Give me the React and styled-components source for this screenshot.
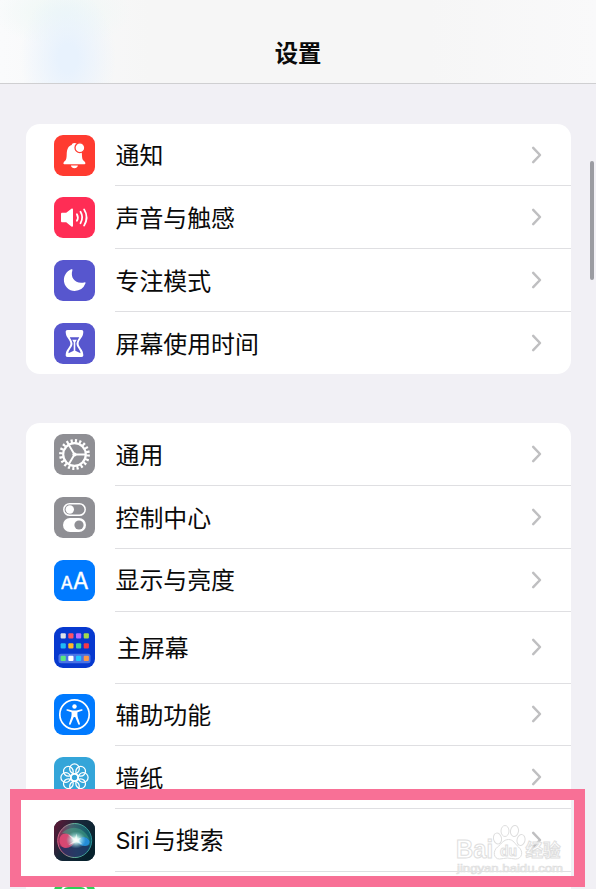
import React from "react"
import styled, { createGlobalStyle } from "styled-components"

const GlobalStyle = createGlobalStyle`
  * {
    box-sizing: border-box;
  }

  body {
    margin: 0;
    overflow: hidden;
    background: #f1f0f5;
    font-family: Inter, "Noto Sans CJK SC", sans-serif;
  }
`

const Screen = styled.div`
  position: relative;
  height: 889px;
  overflow: hidden;
`

const Header = styled.header`
  display: flex;
  justify-content: center;
  height: 84px;
  padding-top: 35px;
  border-bottom: 1px solid #cfcfd1;
  background:
    radial-gradient(ellipse 48px 70px at 68px 58px, #e8f2fd 20%, rgba(232, 242, 253, 0) 100%),
    radial-gradient(ellipse 70px 34px at 62px 12px, #eff8f6 10%, rgba(239, 248, 246, 0) 100%),
    linear-gradient(90deg, #fafbfc, #f6f6f6 25%, #f6f6f6 72%, #f9f9fa);
`

const Title = styled.h1`
  margin: 0;
  color: #0b0b0b;
  font-family: "Noto Sans CJK SC", sans-serif;
  font-size: 23.3px;
  font-weight: 700;
  line-height: 34px;
`

const Groups = styled.main`
  display: flex;
  flex-direction: column;
  gap: 49px;
  padding: 39.7px 25.5px 0 26px;
`

const Card = styled.section`
  flex: none;
  overflow: hidden;
  border-radius: 14px;
  background: #fff;
`

const Row = styled.div`
  display: flex;
  align-items: center;
  gap: 20px;
  height: ${props => props.$height || 62.7}px;
  padding-left: 28px;
`

const IconTile = styled.div`
  flex: none;
  width: 41px;
  height: 41px;
  overflow: hidden;
  border-radius: 9px;
  background: ${props => props.$color};

  svg {
    display: block;
  }
`

const Content = styled.div`
  flex: 1;
  display: flex;
  align-items: center;
  justify-content: space-between;
  height: 100%;
  padding: 0 28px 0 ${props => props.$indent || 0.5}px;
  border-bottom: ${props => (props.$last ? "none" : "1px solid #dfdfe2")};
`

const Label = styled.span`
  padding-top: 3.5px;
  color: #0a0a0a;
  font-size: 23.9px;
  line-height: 34px;
  white-space: nowrap;
`

const Latin = styled.span`
  margin-right: 3px;
  font-size: 23.3px;
  letter-spacing: -0.5px;
`

const ScrollThumb = styled.div`
  position: absolute;
  top: 161px;
  right: 2px;
  width: 4px;
  height: 119px;
  border-radius: 2px;
  background: #9b9ca2;
`

const Highlight = styled.div`
  position: absolute;
  top: 789px;
  left: 10px;
  width: 575px;
  height: 98px;
  border: 11px solid #f87096;
  background: linear-gradient(90deg, #fff 5px, transparent 5px);
`

const Watermark = styled.svg`
  position: absolute;
  top: 820px;
  left: 452px;
`

const BellIcon = () =>
  <svg width="41" height="41" viewBox="0 0 41 41" fill="#fff">
    <path d="M9.400 28.400c0-1 .9-1.800 1.800-2.600 1.200-1.200 1.400-3.300 1.500-6.300.2-5.300 1.400-8.500 5-9.600.4-1.200 1.200-1.900 2.600-1.900 4 0 7.300 4 7.600 11.100.2 4.100.4 5.400 1.800 6.700.8.8 1.700 1.500 1.700 2.500 0 .7-.6 1-1.400 1H10.800c-.9 0-1.400-.4-1.400-1z" />
    <circle cx="25.900" cy="12.700" r="4.900" stroke="#ff3b30" strokeWidth="1.300" />
    <path d="M16.900 30.600h7c-.4 1.700-1.700 2.700-3.500 2.700s-3.100-1-3.500-2.700z" />
  </svg>

const SpeakerIcon = () =>
  <svg width="41" height="41" viewBox="0 0 41 41" fill="none" stroke="#fff" strokeWidth="1.800" strokeLinecap="round">
    <path d="M8.300 15.800h3.900l5.200-4c.8-.6 1.600-.3 1.600.8v16.200c0 1-.8 1.300-1.600.7l-5.200-4.200H8.300c-.8 0-1.300-.5-1.300-1.300v-6.900c0-.8.500-1.300 1.300-1.300z" fill="#fff" stroke="none" />
    <path d="M22.900 17.200a6.500 6.500 0 0 1 0 6.600M26.500 14.800a11 11 0 0 1 0 11.400M30.100 12.400a15.500 15.500 0 0 1 0 16.200" />
  </svg>

const MoonIcon = () =>
  <svg width="41" height="41" viewBox="0 0 41 41" fill="#fff">
    <path d="M17.300 9.300c.8-.4 1.400.1 1.100 1-2.500 7.700 3.300 14.200 11.900 12.100 1-.2 1.500.3 1.100 1.200a11.500 11.500 0 0 1-10.700 7.300A10.900 10.900 0 0 1 9.900 20c0-4.800 3.100-9 7.400-10.700z" />
  </svg>

const HourglassIcon = () =>
  <svg width="41" height="41" viewBox="0 0 41 41">
    <path d="M13.600 7h13.800c1.500 0 2 .7 1.900 2.200-.2 5.900-4.700 7.300-4.700 11.300s4.500 5.400 4.700 11.200c.1 1.500-.4 2.200-1.900 2.200H13.600c-1.500 0-2-.7-1.900-2.200.2-5.800 4.700-7.200 4.700-11.200s-4.500-5.400-4.700-11.300C11.600 7.700 12.100 7 13.600 7z" fill="#fff" />
    <path d="M15.800 14.200h9.400c-.8 1.900-2.400 3.600-2.700 6.300.1 4.100 3.700 5.600 4.100 9.800l-5.300-2.500v-8.500l1.500-2.600h-4.600l1.500 2.600v8.500l-5.300 2.500c.4-4.200 4-5.700 4.100-9.800-.3-2.700-1.900-4.400-2.700-6.300z" fill="#5756ce" />
  </svg>

const GearIcon = () =>
  <svg width="41" height="41" viewBox="0 0 41 41" fill="none" stroke="#fff">
    <circle cx="20.500" cy="20.500" r="11.300" strokeWidth="2.200" />
    <circle cx="20.500" cy="20.500" r="13.600" strokeWidth="3.600" strokeDasharray="2.100 2.172" />
    <circle cx="20.500" cy="20.500" r="2.100" fill="#fff" stroke="none" />
    <path d="M20.500 20.500h11M20.500 20.500l-5.600-9.500M20.500 20.500l-5.600 9.500" strokeWidth="1.900" />
  </svg>

const TogglesIcon = () =>
  <svg width="41" height="41" viewBox="0 0 41 41">
    <rect x="9.800" y="6.700" width="21.400" height="11.600" rx="5.800" fill="none" stroke="#fff" strokeWidth="1.500" />
    <circle cx="15.800" cy="12.500" r="4.200" fill="#fff" />
    <rect x="9" y="21" width="23" height="14" rx="7" fill="#fff" />
    <circle cx="25" cy="28" r="4.600" fill="#8f8f94" />
  </svg>

const LetterIcon = () =>
  <svg width="41" height="41" viewBox="0 0 41 41" fill="#fff" fontFamily="Inter, sans-serif" stroke="#fff" strokeWidth=".4">
    <text x="6.700" y="29" fontSize="17.500" textLength="12" lengthAdjust="spacingAndGlyphs">A</text>
    <text x="19" y="29" fontSize="23" textLength="15.500" lengthAdjust="spacingAndGlyphs">A</text>
  </svg>

const appColors = [
  ["#dfe2e9", "#ff5265", "#b86aff", "#a5d94c"],
  ["#20b9f5", "#ffb927", "#3bd39d", "#f63746"],
  ["#59e77f", "#fff", "#20c5ff", "#ff9848"],
]

const HomeIcon = () =>
  <svg width="41" height="41" viewBox="0 0 41 41">
    <rect x="4.500" y="26.700" width="32" height="9.600" rx="2.500" fill="#4a73e5" />
    {appColors.map((line, y) =>
      line.map((color, x) =>
        <rect key={`${x}-${y}`} x={6.6 + x * 7.7} y={[6.3, 16.2, 28.8][y]} width="5.200" height="5.200" rx="1" fill={color} />
      )
    )}
  </svg>

const AccessibilityIcon = () =>
  <svg width="41" height="41" viewBox="0 0 41 41" fill="#fff">
    <circle cx="20.500" cy="20.500" r="14.700" fill="none" stroke="#fff" strokeWidth="1.700" />
    <circle cx="20.500" cy="12.500" r="2.200" />
    <path d="M13.500 15.200l5.100 1.200h3.800l5.100-1.200c1.300-.2 1.500 1.100.4 1.500l-4.400 1.500c-.4 3 .3 5.300 1.100 7.400l1.300 4c.3 1.300-1.100 1.700-1.600.6l-3.100-7.200h-1.400l-3.100 7.200c-.5 1.100-1.900.7-1.600-.6l1.300-4c.8-2.100 1.500-4.400 1.100-7.400l-4.400-1.500c-1.100-.4-.9-1.700.4-1.500z" />
  </svg>

const petals = [0, 45, 90, 135, 180, 225, 270, 315]

const FlowerIcon = () =>
  <svg width="41" height="41" viewBox="0 0 41 41" fill="none" stroke="#fff" strokeWidth="1.250">
    {petals.map(angle =>
      <ellipse key={angle} cx="20.500" cy="11.800" rx="4.800" ry="4.900" transform={`rotate(${angle} 20.500 20.500)`} />
    )}
    <circle cx="20.500" cy="20.500" r="3.300" />
  </svg>

const SiriIcon = () =>
  <svg width="41" height="41" viewBox="0 0 41 41">
    <defs>
      <linearGradient id="siri-base" x1="0" y1="0" x2="1" y2=".6">
        <stop offset="0" stopColor="#641735" />
        <stop offset=".5" stopColor="#17283a" />
        <stop offset="1" stopColor="#06212c" />
      </linearGradient>
      <linearGradient id="siri-orb" x1="0" y1=".6" x2="1" y2=".4">
        <stop offset="0" stopColor="#9b2451" />
        <stop offset=".48" stopColor="#456470" />
        <stop offset="1" stopColor="#095c69" />
      </linearGradient>
      <linearGradient id="siri-ring">
        <stop offset="0" stopColor="#d66083" />
        <stop offset=".5" stopColor="#62b89c" />
        <stop offset="1" stopColor="#278d93" />
      </linearGradient>
      <radialGradient id="siri-glow">
        <stop offset="0" stopColor="#fff" />
        <stop offset=".3" stopColor="#dcfff7" stopOpacity=".9" />
        <stop offset="1" stopColor="#86d5df" stopOpacity="0" />
      </radialGradient>
    </defs>
    <rect width="41" height="41" fill="url(#siri-base)" />
    <circle cx="20.700" cy="20.500" r="17" fill="url(#siri-orb)" stroke="url(#siri-ring)" strokeWidth="1" />
    <path d="M5 25c6 6 11-2 17-3s9 6 14 3c-2 8-8 12-15 12S7 33 5 25z" fill="#192d61" opacity=".75" />
    <path d="M22 21c-4-6-8-9-13-7-6 3-4 14 3 14 4 0 7-3 10-7z" fill="#f04b78" opacity=".8" />
    <path d="M22 21c5-5 10-5 13-1 2 3-1 6-4 6-4 0-6-2-9-5z" fill="#2591e3" opacity=".9" />
    <path d="M8 13c7-7 20-9 28 7-6-5-11-3-14 1-4-5-9-8-14-8z" fill="#48bd91" opacity=".4" />
    <ellipse cx="22" cy="20" rx="10" ry="8.500" fill="url(#siri-glow)" />
    <path d="M14 14.500l7 4 1.500-5 1 5.500 4-1.500-3 3 4 4-6-2.500-8 3 5.500-4z" fill="#fff" opacity=".6" />
  </svg>

const FaceIdIcon = () =>
  <svg width="41" height="41" viewBox="0 0 41 41" fill="none" stroke="#fff" strokeWidth="2">
    <path d="M7 11c1-5 3-7 7-7M27 4c4 0 6 2 7 7" />
  </svg>

const Chevron = () =>
  <svg width="12" height="20" viewBox="0 0 12 20" fill="none" stroke="#bfbfc1" strokeWidth="2.500" strokeLinecap="round" strokeLinejoin="round">
    <path d="M2.200 2.900L9 10l-6.800 7.100" />
  </svg>

const groups = [
  [
    { label: "通知", icon: <BellIcon />, color: "#ff3b30" },
    { label: "声音与触感", icon: <SpeakerIcon />, color: "#ff2d55" },
    { label: "专注模式", icon: <MoonIcon />, color: "#5756ce" },
    { label: "屏幕使用时间", icon: <HourglassIcon />, color: "#5756ce" },
  ],
  [
    { label: "通用", icon: <GearIcon />, color: "#8f8f94" },
    { label: "控制中心", icon: <TogglesIcon />, color: "#8f8f94" },
    { label: "显示与亮度", icon: <LetterIcon />, color: "#007aff" },
    { label: "主屏幕", icon: <HomeIcon />, color: "#0739cf", height: 72, indent: 2 },
    { label: "辅助功能", icon: <AccessibilityIcon />, color: "#007aff" },
    { label: "墙纸", icon: <FlowerIcon />, color: "#34a5d9" },
    { label: <><Latin>Siri</Latin>与搜索</>, icon: <SiriIcon />, color: "#17283a" },
    { label: "", icon: <FaceIdIcon />, color: "#30ce57" },
  ],
]

const SettingRow = ({ item, last }) =>
  <Row $height={item.height}>
    <IconTile $color={item.color}>{item.icon}</IconTile>
    <Content $indent={item.indent} $last={last}>
      <Label>{item.label}</Label>
      <Chevron />
    </Content>
  </Row>

const BaiduWatermark = () =>
  <Watermark width="120" height="58" viewBox="0 0 120 58" fill="#fff" fillOpacity=".8" stroke="#dedede" strokeWidth="1" fontFamily='"Liberation Sans", "Noto Sans CJK SC", sans-serif' fontWeight="700">
    <text x="4" y="38" fontSize="25" textLength="37" lengthAdjust="spacingAndGlyphs">Bai</text>
    <ellipse cx="45.500" cy="18.500" rx="4" ry="5.500" transform="rotate(-12 45.500 18.500)" />
    <ellipse cx="53" cy="11" rx="4" ry="5.500" />
    <ellipse cx="62.500" cy="11" rx="4" ry="5.500" transform="rotate(10 62.500 11)" />
    <ellipse cx="69" cy="20" rx="4" ry="5.500" transform="rotate(12 69 20)" />
    <path d="M56.500 19.500c5 0 6.500 4.500 10 7.500 5.500 4.500 3.500 12-3 12-3 0-5-1-8-1-3 0-5 1-8 1-6 0-7-8-2-12 4-3 6-7.500 11-7.500z" />
    <text x="48" y="36" fontSize="15" textLength="17" lengthAdjust="spacingAndGlyphs">du</text>
    <text x="73.500" y="37" fontSize="18" textLength="35" lengthAdjust="spacingAndGlyphs">经验</text>
    <text x="5" y="52" fontSize="11.500" fontWeight="400" strokeWidth=".7" textLength="106" lengthAdjust="spacingAndGlyphs">jingyan.baidu.com</text>
  </Watermark>

const App = () =>
  <Screen>
    <GlobalStyle />
    <Header>
      <Title>设置</Title>
    </Header>
    <Groups>
      {groups.map((items, i) =>
        <Card key={i}>
          {items.map((item, j) =>
            <SettingRow key={j} item={item} last={j === items.length - 1} />
          )}
        </Card>
      )}
    </Groups>
    <ScrollThumb />
    <Highlight />
    <BaiduWatermark />
  </Screen>

export default App
